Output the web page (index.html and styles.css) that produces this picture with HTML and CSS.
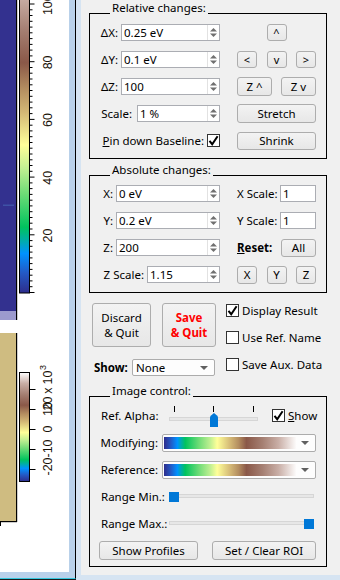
FILE: index.html
```html
<!DOCTYPE html>
<html>
<head>
<meta charset="utf-8">
<link rel="stylesheet" href="styles.css">
</head>
<body>
<div class="app">
  <div class="mdi">
    <div class="mdi-frame">
      <div class="plot">
        <svg width="69" height="572" viewBox="0 0 69 572" xmlns="http://www.w3.org/2000/svg">
          <defs>
            <linearGradient id="cmapV" x1="0" y1="1" x2="0" y2="0">
              <stop offset="0" stop-color="#2e2d8c"/>
              <stop offset="0.06" stop-color="#2458c4"/>
              <stop offset="0.12" stop-color="#0092ff"/>
              <stop offset="0.16" stop-color="#00ada8"/>
              <stop offset="0.2" stop-color="#00c35e"/>
              <stop offset="0.3" stop-color="#6cdb76"/>
              <stop offset="0.38" stop-color="#c2f092"/>
              <stop offset="0.45" stop-color="#ffff99"/>
              <stop offset="0.55" stop-color="#d3b775"/>
              <stop offset="0.62" stop-color="#b48e60"/>
              <stop offset="0.7" stop-color="#8a5848"/>
              <stop offset="0.8" stop-color="#a57f72"/>
              <stop offset="0.9" stop-color="#c9aea6"/>
              <stop offset="1" stop-color="#ffffff"/>
            </linearGradient>
          </defs>
          <!-- plot 1 -->
          <rect x="0" y="0" width="16" height="311" fill="#33318f"/>
          <rect x="0" y="311" width="16" height="9" fill="#9c9ace"/>
          <rect x="3" y="204.5" width="11" height="1.5" fill="#3f52a6"/>
          <rect x="16" y="0" width="1.2" height="320" fill="#000"/>
          <rect x="19.5" y="-36" width="10" height="329" fill="url(#cmapV)" stroke="#000" stroke-width="1"/>
          <g stroke="#000" stroke-width="1">
            <path d="M29.5 292.5h5M29.5 286.7h3M29.5 280.9h3M29.5 275.2h3M29.5 269.4h3M29.5 263.6h3M29.5 257.9h3M29.5 252.1h3M29.5 246.3h3M29.5 240.6h3M29.5 234.8h5M29.5 229h3M29.5 223.2h3M29.5 217.5h3M29.5 211.7h3M29.5 205.9h3M29.5 200.2h3M29.5 194.4h3M29.5 188.6h3M29.5 182.9h3M29.5 177.1h5M29.5 171.3h3M29.5 165.5h3M29.5 159.8h3M29.5 154h3M29.5 148.2h3M29.5 142.5h3M29.5 136.7h3M29.5 130.9h3M29.5 125.2h3M29.5 119.4h5M29.5 113.6h3M29.5 107.8h3M29.5 102.1h3M29.5 96.3h3M29.5 90.5h3M29.5 84.8h3M29.5 79h3M29.5 73.2h3M29.5 67.5h3M29.5 61.7h5M29.5 55.9h3M29.5 50.1h3M29.5 44.4h3M29.5 38.6h3M29.5 32.8h3M29.5 27.1h3M29.5 21.3h3M29.5 15.5h3M29.5 9.8h3M29.5 4h5"/>
          </g>
          <g font-family="Liberation Sans, Arial, sans-serif" font-size="12.5" fill="#1a1208" text-anchor="middle">
            <text transform="translate(52 235.5) rotate(-90)">20</text>
            <text transform="translate(52 177.8) rotate(-90)">40</text>
            <text transform="translate(52 120.1) rotate(-90)">60</text>
            <text transform="translate(52 62.4) rotate(-90)">80</text>
            <text transform="translate(52 4.7) rotate(-90)">100</text>
          </g>
          <!-- plot 2 -->
          <rect x="0" y="333" width="16" height="188" fill="#cfbc81"/>
          <rect x="16" y="333" width="1.2" height="189" fill="#000"/>
          <rect x="0" y="521" width="17" height="1.2" fill="#000"/>
          <rect x="0" y="521" width="1" height="5" fill="#000"/>
          <rect x="19.5" y="372.5" width="10" height="109" fill="url(#cmapV)" stroke="#000" stroke-width="1"/>
          <g stroke="#000" stroke-width="1">
            <path d="M29.5 389.5h6M29.5 409.5h6M29.5 429.5h6M29.5 449.5h6M29.5 469.5h6"/>
          </g>
          <g font-family="Liberation Sans, Arial, sans-serif" font-size="12.5" fill="#1a1208" text-anchor="middle">
            <text transform="translate(52 466.5) rotate(-90)">-20</text>
            <text transform="translate(52 448.5) rotate(-90)">-10</text>
            <text transform="translate(52 429) rotate(-90)">0</text>
            <text transform="translate(52 409) rotate(-90)">10</text>
            <text transform="translate(52 403.5) rotate(-90)">20</text>
            <text transform="translate(52 390.5) rotate(-90)">x</text>
            <text transform="translate(52 377.5) rotate(-90)">10</text>
            <text transform="translate(46 367.5) rotate(-90)" font-size="9">3</text>
          </g>
        </svg>
      </div>
    </div>
  </div>

  <div class="panel">
    <!-- Relative changes -->
    <div class="group">
      <div class="gb-head"><span class="gb-title">Relative changes:</span></div>
      <div class="gb-body grid g1">
        <div class="lcell"><span>ΔX:</span>
          <div class="spin w99"><span class="val">0.25 eV</span><span class="arrows"><svg width="7" height="11" viewBox="0 0 7 11"><polygon points="0,4.5 3.5,1 7,4.5"/><polygon points="0,6.5 3.5,10 7,6.5"/></svg></span></div>
        </div>
        <div class="rcell center"><button class="btn sm">^</button></div>

        <div class="lcell"><span>ΔY:</span>
          <div class="spin w99"><span class="val">0.1 eV</span><span class="arrows"><svg width="7" height="11" viewBox="0 0 7 11"><polygon points="0,4.5 3.5,1 7,4.5"/><polygon points="0,6.5 3.5,10 7,6.5"/></svg></span></div>
        </div>
        <div class="rcell between"><button class="btn sm">&lt;</button><button class="btn sm">v</button><button class="btn sm">&gt;</button></div>

        <div class="lcell"><span>ΔZ:</span>
          <div class="spin w99"><span class="val">100</span><span class="arrows"><svg width="7" height="11" viewBox="0 0 7 11"><polygon points="0,4.5 3.5,1 7,4.5"/><polygon points="0,6.5 3.5,10 7,6.5"/></svg></span></div>
        </div>
        <div class="rcell between"><button class="btn zb">Z ^</button><button class="btn zb">Z v</button></div>

        <div class="lcell gap5"><span>Scale:</span>
          <div class="spin w83"><span class="val">1 %</span><span class="arrows"><svg width="7" height="11" viewBox="0 0 7 11"><polygon points="0,4.5 3.5,1 7,4.5"/><polygon points="0,6.5 3.5,10 7,6.5"/></svg></span></div>
        </div>
        <div class="rcell"><button class="btn full">Stretch</button></div>

        <div class="lcell"><span><u>P</u>in down Baseline:</span>
          <span class="cb"><svg width="11" height="11" viewBox="0 0 11 11"><path d="M1.5 5.8 L4.2 9.2 L9.6 1.2" fill="none" stroke="#000" stroke-width="2"/></svg></span>
        </div>
        <div class="rcell"><button class="btn full h18">Shrink</button></div>
      </div>
    </div>

    <!-- Absolute changes -->
    <div class="group g2wrap">
      <div class="gb-head"><span class="gb-title">Absolute changes:</span></div>
      <div class="gb-body grid g2">
        <div class="lcell"><span>X:</span>
          <div class="spin w104"><span class="val">0 eV</span><span class="arrows"><svg width="7" height="11" viewBox="0 0 7 11"><polygon points="0,4.5 3.5,1 7,4.5"/><polygon points="0,6.5 3.5,10 7,6.5"/></svg></span></div>
        </div>
        <div class="rcell between"><span>X Scale:</span><div class="edit">1</div></div>

        <div class="lcell"><span>Y:</span>
          <div class="spin w104"><span class="val">0.2 eV</span><span class="arrows"><svg width="7" height="11" viewBox="0 0 7 11"><polygon points="0,4.5 3.5,1 7,4.5"/><polygon points="0,6.5 3.5,10 7,6.5"/></svg></span></div>
        </div>
        <div class="rcell between"><span>Y Scale:</span><div class="edit">1</div></div>

        <div class="lcell"><span>Z:</span>
          <div class="spin w104"><span class="val">200</span><span class="arrows"><svg width="7" height="11" viewBox="0 0 7 11"><polygon points="0,4.5 3.5,1 7,4.5"/><polygon points="0,6.5 3.5,10 7,6.5"/></svg></span></div>
        </div>
        <div class="rcell between"><b><u>R</u>eset:</b><button class="btn all">All</button></div>

        <div class="lcell"><span>Z Scale:</span>
          <div class="spin w73"><span class="val">1.15</span><span class="arrows"><svg width="7" height="11" viewBox="0 0 7 11"><polygon points="0,4.5 3.5,1 7,4.5"/><polygon points="0,6.5 3.5,10 7,6.5"/></svg></span></div>
        </div>
        <div class="rcell between"><button class="btn xyz">X</button><button class="btn xyz">Y</button><button class="btn xyz">Z</button></div>
      </div>
    </div>

    <!-- actions -->
    <div class="actions">
      <div class="act-left">
        <div class="act-btns">
          <button class="btn big discard"><span class="bl">Discard</span><span class="bl">&amp; Quit</span></button>
          <button class="btn big save"><span class="bl">Save</span><span class="bl">&amp; Quit</span></button>
        </div>
        <div class="show-row"><b>Show:</b>
          <div class="combo w83"><span class="cval">None</span><svg class="carrow" width="8" height="4" viewBox="0 0 8 4"><polygon points="0,0 8,0 4,4"/></svg></div>
        </div>
      </div>
      <div class="act-right">
        <div class="chk"><span class="cb"><svg width="11" height="11" viewBox="0 0 11 11"><path d="M1.5 5.8 L4.2 9.2 L9.6 1.2" fill="none" stroke="#000" stroke-width="2"/></svg></span><span>Display Result</span></div>
        <div class="chk"><span class="cb"></span><span>Use Ref. Name</span></div>
        <div class="chk"><span class="cb"></span><span>Save Aux. Data</span></div>
      </div>
    </div>

    <!-- Image control -->
    <div class="group">
      <div class="gb-head"><span class="gb-title">Image control:</span></div>
      <div class="gb-body g3">
        <div class="row3">
          <span class="lab68">Ref. Alpha:</span>
          <div class="aslider">
            <span class="tick t1"></span><span class="tick t2"></span><span class="tick t3"></span>
            <span class="groove"></span>
            <svg class="ahandle" width="8" height="14" viewBox="0 0 8 14"><path d="M0 4.5 Q0 3.5 1 2.6 L4 0 L7 2.6 Q8 3.5 8 4.5 V14 H0 Z" fill="#0078d7"/></svg>
          </div>
          <div class="chk show"><span class="cb"><svg width="11" height="11" viewBox="0 0 11 11"><path d="M1.5 5.8 L4.2 9.2 L9.6 1.2" fill="none" stroke="#000" stroke-width="2"/></svg></span><span><u>S</u>how</span></div>
        </div>
        <div class="row3 end">
          <span>Modifying:</span>
          <div class="combo cmap"><span class="swatch"></span><svg class="carrow" width="8" height="4" viewBox="0 0 8 4"><polygon points="0,0 8,0 4,4"/></svg></div>
        </div>
        <div class="row3 end">
          <span>Reference:</span>
          <div class="combo cmap"><span class="swatch"></span><svg class="carrow" width="8" height="4" viewBox="0 0 8 4"><polygon points="0,0 8,0 4,4"/></svg></div>
        </div>
        <div class="row3">
          <span class="lab68">Range Min.:</span>
          <div class="rslider start"><span class="rgroove"></span><span class="rhandle"></span></div>
        </div>
        <div class="row3">
          <span class="lab68">Range Max.:</span>
          <div class="rslider finish"><span class="rgroove"></span><span class="rhandle"></span></div>
        </div>
        <div class="row3 btnrow">
          <button class="btn prof">Show Profiles</button>
          <button class="btn roi">Set / Clear ROI</button>
        </div>
      </div>
    </div>
  </div>
</div>
</body>
</html>
```

FILE: styles.css
```css
* { box-sizing: border-box; }
html, body { margin: 0; padding: 0; }
body {
  width: 340px;
  height: 580px;
  overflow: hidden;
  background: #d6e4f2;
  font-family: "Noto Sans", "Open Sans", sans-serif;
  font-size: 11.5px;
  color: #000;
}
.app { display: flex; height: 580px; }

/* left MDI window with plots */
.mdi { width: 76px; height: 580px; flex: none; border-bottom: 1px solid #1b1b1b; }
.mdi-frame {
  height: 579px;
  background: #b9d1ea;
  border-right: 1px solid #000;
  border-bottom: 1px solid #35c6dc;
  padding: 0 6px 6px 0;
}
.plot { background: #fff; height: 572px; overflow: hidden; }
.plot svg { display: block; }

/* right control panel */
.panel {
  margin-left: 5px;
  width: 259px;
  height: 575px;
  background: #f0f0f0;
  padding: 0 13px 0 8px;
}

/* group boxes */
.gb-head { display: flex; height: 14px; }
.gb-head::before {
  content: "";
  width: 21px;
  align-self: flex-end;
  border-bottom: 1px solid #000;
}
.gb-head::after {
  content: "";
  flex: 1;
  align-self: flex-end;
  border-bottom: 1px solid #000;
}
.gb-title { line-height: 16px; padding: 0 2px; white-space: nowrap; align-self: flex-start; }
.gb-body { border: 1px solid #000; border-top: 0; }

.grid {
  display: grid;
  grid-template-columns: 121px 79px;
  column-gap: 17px;
  grid-auto-rows: 27px;
  align-items: center;
}
.g1 { padding: 5px 10px 4px 9px; }
.g2wrap { margin-top: 3px; }
.g2 { padding: 4px 10px 4px 9px; }

.lcell { display: flex; justify-content: flex-end; align-items: center; gap: 3px; white-space: nowrap; }
.lcell.gap5 { gap: 5px; }
.rcell { display: flex; align-items: center; white-space: nowrap; }
.rcell.center { justify-content: center; }
.rcell.between { justify-content: space-between; }

/* spin boxes */
.spin {
  height: 17px;
  border: 1px solid #abadb3;
  background: #fff;
  display: flex;
  align-items: center;
  flex: none;
}
.spin .val { flex: 1; padding-left: 2px; line-height: 15px; }
.spin .arrows {
  width: 12px;
  height: 100%;
  border-left: 1px solid #e2e2e2;
  display: flex;
  align-items: center;
  justify-content: center;
}
.spin .arrows svg { fill: #707070; display: block; }
.w99 { width: 99px; }
.w83 { width: 83px; }
.w104 { width: 104px; }
.w73 { width: 73px; }

.edit {
  width: 36px;
  height: 17px;
  border: 1px solid #abadb3;
  background: #fff;
  padding-left: 2px;
  line-height: 15px;
}

/* buttons */
.btn {
  font: inherit;
  color: #000;
  margin: 0;
  padding: 0;
  background: linear-gradient(#f3f3f3, #e7e7e7);
  border: 1px solid #adadad;
  border-radius: 3px;
  line-height: 14px;
  flex: none;
}
.btn.sm { width: 20px; height: 17px; font-size: 11px; }
.btn.zb { width: 35px; height: 19px; }
.btn.full { width: 79px; height: 19px; }
.btn.h18 { height: 18px; }
.btn.all { width: 35px; height: 18px; }
.btn.xyz { width: 20px; height: 18px; }

/* actions area */
.actions { display: flex; height: 90px; margin-left: 3px; }
.act-left { width: 124px; display: flex; flex-direction: column; }
.act-btns { display: flex; gap: 11px; margin-top: 10px; }
.btn.big {
  height: 44px;
  display: flex;
  flex-direction: column;
  align-items: center;
  justify-content: center;
  line-height: 15px;
}
.bl { display: block; height: 15px; }
.btn.discard { width: 59px; }
.btn.save { width: 54px; color: #ff0000; font-weight: bold; }
.show-row {
  margin-top: 12px;
  width: 123px;
  padding-left: 2px;
  display: flex;
  justify-content: space-between;
  align-items: center;
}
.act-right { margin-left: 10px; padding-top: 4px; display: flex; flex-direction: column; }
.chk { display: flex; align-items: center; gap: 3px; height: 27px; white-space: nowrap; }

.cb {
  width: 13px;
  height: 13px;
  border: 1px solid #333;
  background: #fff;
  display: inline-flex;
  align-items: center;
  justify-content: center;
  flex: none;
}
.cb svg { display: block; }

/* combos */
.combo {
  height: 17px;
  border: 1px solid #acacac;
  border-radius: 2px;
  background: #fdfdfd;
  display: flex;
  align-items: center;
  flex: none;
}
.combo .cval { flex: 1; padding-left: 3px; line-height: 15px; }
.carrow { fill: #606060; margin-right: 6px; flex: none; }
.combo.cmap { width: 154px; height: 18px; padding-left: 1px; }
.swatch {
  width: 133px;
  height: 12px;
  margin-right: auto;
  background: linear-gradient(to right,
    #2e2d8c 0%, #2458c4 5%, #0092ff 10%, #00ada8 13%, #00c35e 16%,
    #6cdb76 26%, #c2f092 35%, #ffff99 40%, #d3b775 50%, #b48e60 56%,
    #8a5848 62%, #a57f72 74%, #c9aea6 86%, #ffffff 100%);
}

/* image control group */
.g3 { padding: 5px 10px 2px 11px; }
.row3 { height: 27px; display: flex; align-items: center; white-space: nowrap; }
.row3.end { justify-content: flex-end; gap: 4px; }
.lab68 { width: 68px; flex: none; }

.aslider { position: relative; width: 89px; height: 27px; flex: none; }
.tick { position: absolute; top: 4px; width: 1px; height: 6px; background: #000; }
.t1 { left: 5px; }
.t2 { left: 44px; }
.t3 { left: 84px; }
.groove {
  position: absolute;
  left: 0; right: 0;
  top: 15px;
  height: 4px;
  background: #e7e7e7;
  border: 1px solid #d6d6d6;
}
.ahandle { position: absolute; left: 41px; top: 11px; display: block; }
.chk.show { margin-left: 14px; }

.rslider {
  flex: 1;
  height: 27px;
  margin-right: 2px;
  display: flex;
  align-items: center;
  position: relative;
}
.rslider.finish { justify-content: flex-end; }
.rgroove {
  position: absolute;
  left: 0; right: 0;
  top: 11px;
  height: 4px;
  background: #e7e7e7;
  border: 1px solid #d6d6d6;
}
.rhandle { position: relative; width: 10px; height: 10px; background: #0078d7; }

.btnrow { margin-left: -2px; gap: 14px; }
.btn.prof { width: 99px; height: 19px; }
.btn.roi { width: 104px; height: 19px; }
```
